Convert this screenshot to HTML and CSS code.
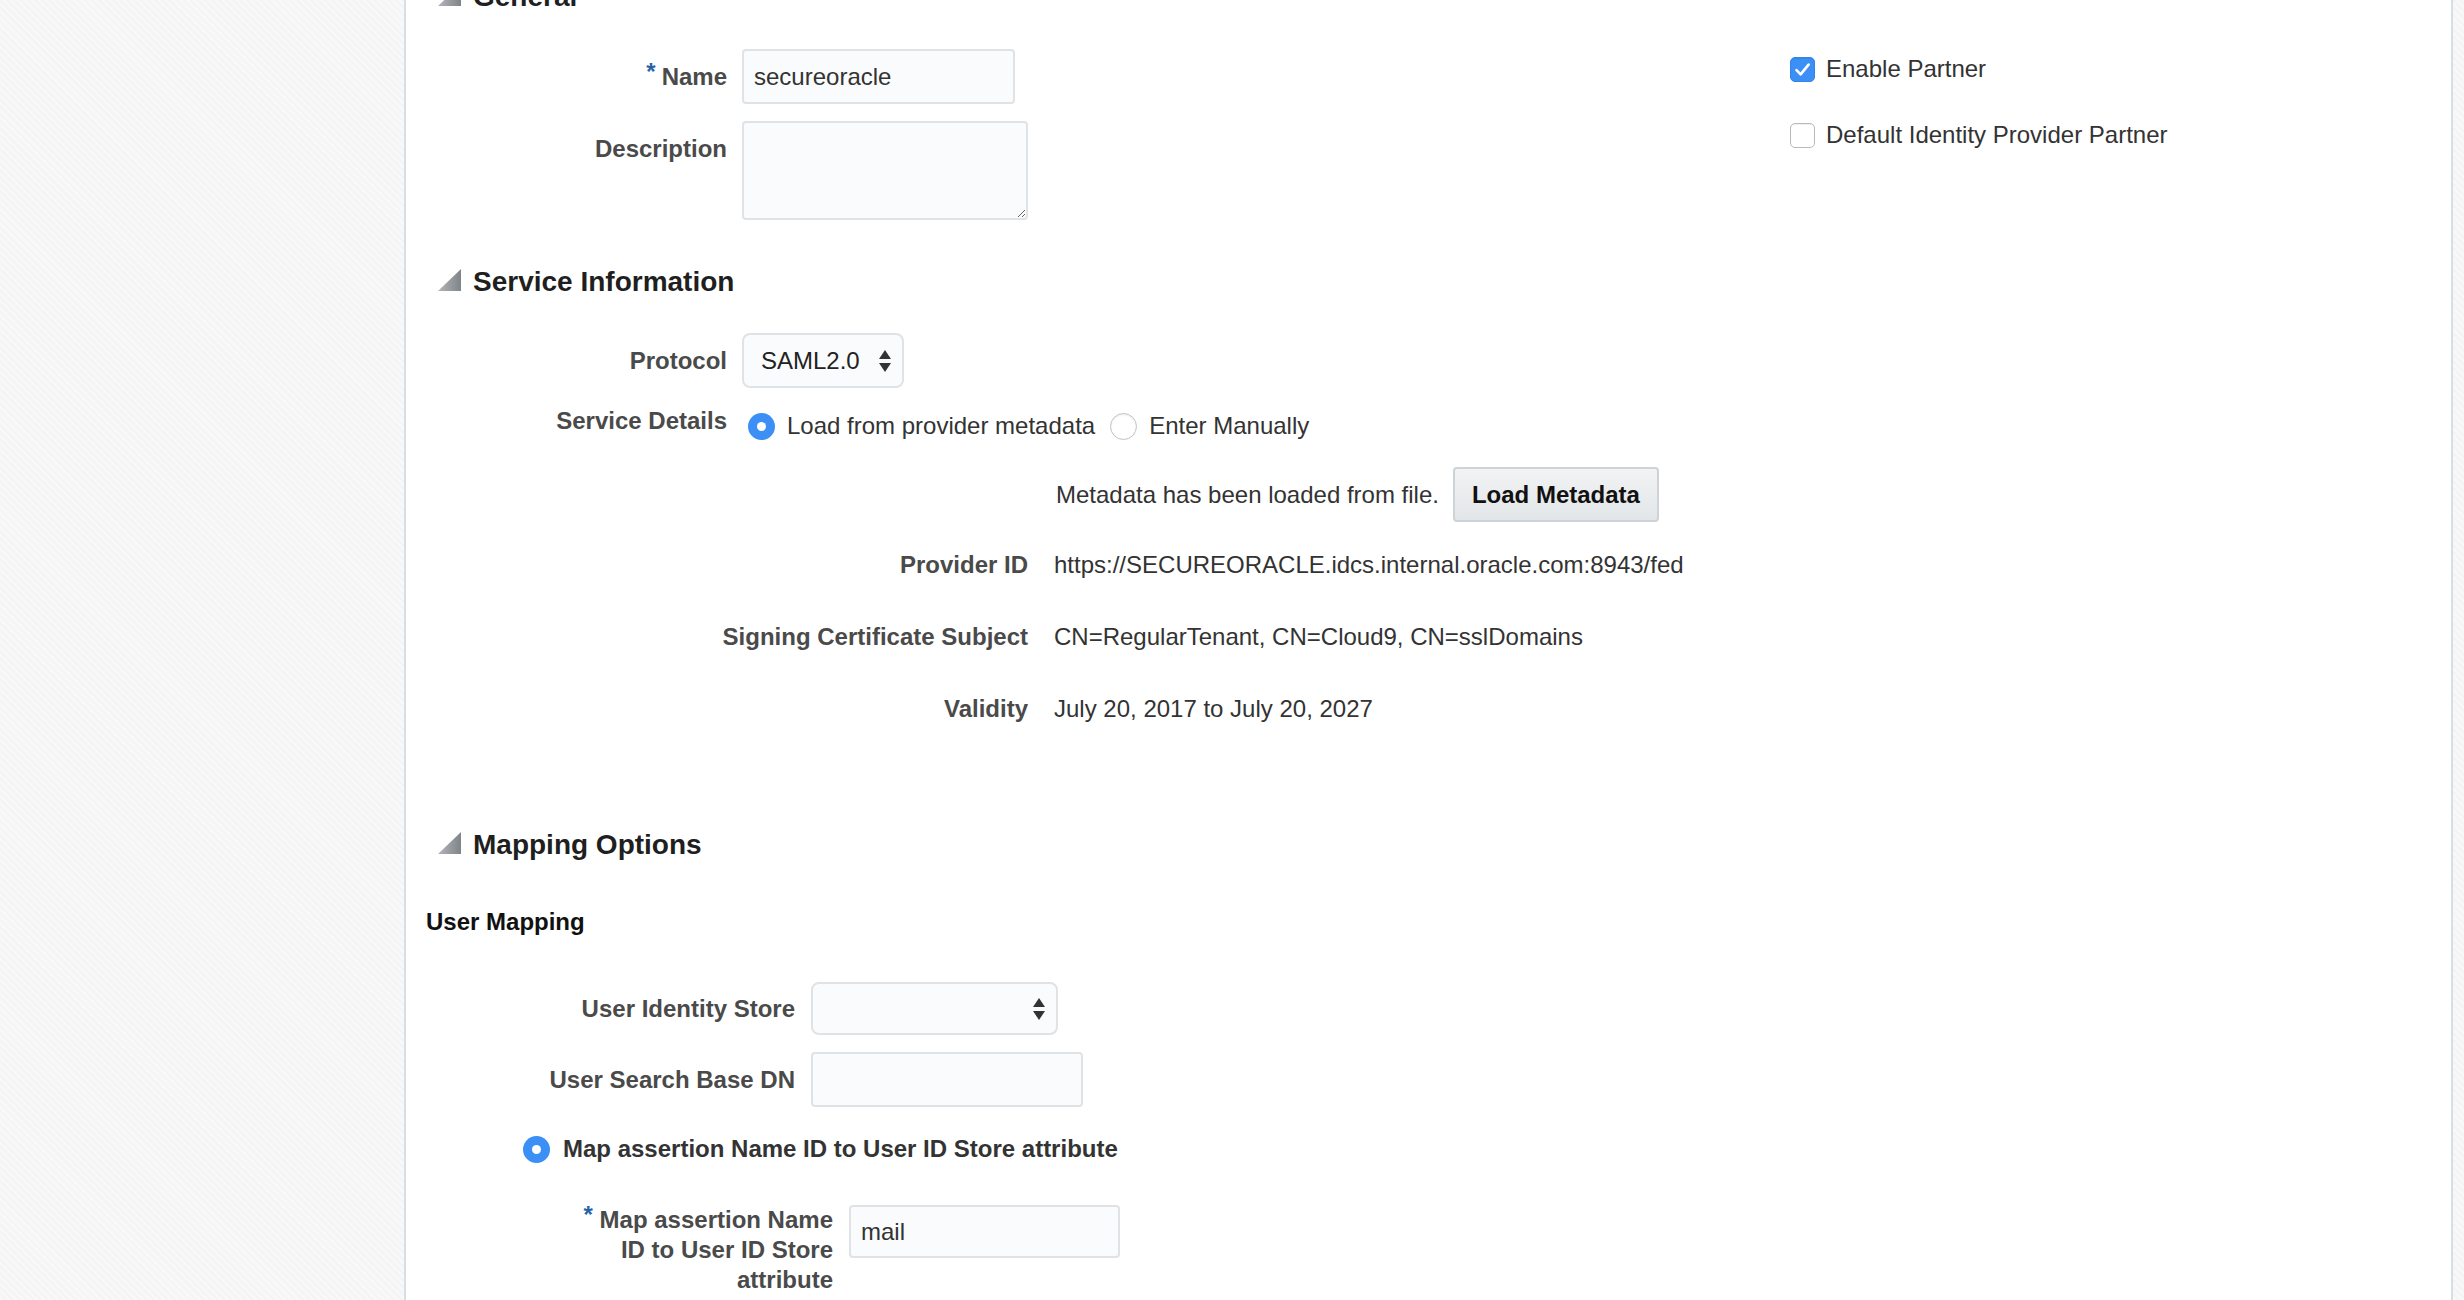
FILE: index.html
```html
<!DOCTYPE html>
<html lang="en">
<head>
<meta charset="utf-8">
<title>Identity Provider Partner</title>
<link rel="stylesheet" href="styles.css">
</head>
<body>
<div class="page">
  <div class="gutter gutter-left"></div>
  <main class="panel">
    <section class="section">
      <h2 class="sec-head first"><svg class="tri" viewBox="0 0 23 22" width="23" height="22"><defs><linearGradient id="tg" x1="0" y1="0" x2="1" y2="0"><stop offset="0" stop-color="#b3b6b9"/><stop offset="1" stop-color="#7f8489"/></linearGradient></defs><polygon points="23,0 23,22 0,22" fill="url(#tg)"/></svg><span>General</span></h2>
      <div class="general-body">
        <div class="general-grid">
          <label class="lbl"><span class="req">*</span>Name</label>
          <input class="field name-field" type="text" value="secureoracle">
          <label class="lbl desc-lbl">Description</label>
          <textarea class="field textarea"></textarea>
        </div>
        <div class="checks">
          <div class="check-row"><span class="checkbox checked"><svg viewBox="0 0 25 25" width="25" height="25"><path d="M6.5 13.2 L10.6 17.3 L18.6 7.6" fill="none" stroke="#fff" stroke-width="2.6" stroke-linecap="round" stroke-linejoin="round"/></svg></span><span>Enable Partner</span></div>
          <div class="check-row"><span class="checkbox"></span><span>Default Identity Provider Partner</span></div>
        </div>
      </div>
    </section>

    <section class="section">
      <h2 class="sec-head service-head"><svg class="tri" viewBox="0 0 23 22" width="23" height="22"><defs><linearGradient id="tg2" x1="0" y1="0" x2="1" y2="0"><stop offset="0" stop-color="#b3b6b9"/><stop offset="1" stop-color="#7f8489"/></linearGradient></defs><polygon points="23,0 23,22 0,22" fill="url(#tg2)"/></svg><span>Service Information</span></h2>
      <div class="frow g1 protocol-row">
        <label class="lbl">Protocol</label>
        <div class="select protocol-select"><span>SAML2.0</span><svg class="arrows" viewBox="0 0 12 22" width="12" height="22"><polygon points="0,9 6,0 12,9" fill="#333"/><polygon points="0,13 12,13 6,22" fill="#333"/></svg></div>
      </div>
      <div class="frow g1 details-row">
        <label class="lbl details-lbl">Service Details</label>
        <div class="radio-group">
          <span class="radio on"><span class="dot"></span></span><span class="radio-text">Load from provider metadata</span>
          <span class="radio off"></span><span class="radio-text">Enter Manually</span>
        </div>
      </div>
      <div class="frow g2 meta-row">
        <span></span>
        <div class="meta-line"><span class="val">Metadata has been loaded from file.</span><button class="btn" type="button">Load Metadata</button></div>
      </div>
      <div class="frow g2 info-row first-info">
        <label class="lbl">Provider ID</label>
        <span class="val">https://SECUREORACLE.idcs.internal.oracle.com:8943/fed</span>
      </div>
      <div class="frow g2 info-row">
        <label class="lbl">Signing Certificate Subject</label>
        <span class="val">CN=RegularTenant, CN=Cloud9, CN=sslDomains</span>
      </div>
      <div class="frow g2 info-row">
        <label class="lbl">Validity</label>
        <span class="val">July 20, 2017 to July 20, 2027</span>
      </div>
    </section>

    <section class="section">
      <h2 class="sec-head mapping-head"><svg class="tri" viewBox="0 0 23 22" width="23" height="22"><defs><linearGradient id="tg3" x1="0" y1="0" x2="1" y2="0"><stop offset="0" stop-color="#b3b6b9"/><stop offset="1" stop-color="#7f8489"/></linearGradient></defs><polygon points="23,0 23,22 0,22" fill="url(#tg3)"/></svg><span>Mapping Options</span></h2>
      <h3 class="sub-head">User Mapping</h3>
      <div class="frow g3 store-row">
        <label class="lbl">User Identity Store</label>
        <div class="select store-select"><span></span><svg class="arrows" viewBox="0 0 12 22" width="12" height="22"><polygon points="0,9 6,0 12,9" fill="#333"/><polygon points="0,13 12,13 6,22" fill="#333"/></svg></div>
      </div>
      <div class="frow g3 dn-row">
        <label class="lbl">User Search Base DN</label>
        <input class="field dn-field" type="text" value="">
      </div>
      <div class="map-radio-row">
        <span class="radio on"><span class="dot"></span></span><span class="map-radio-text">Map assertion Name ID to User ID Store attribute</span>
      </div>
      <div class="frow g4 attr-row">
        <label class="lbl attr-lbl"><span class="req">*</span> Map assertion Name ID to User ID Store attribute</label>
        <input class="field mail-field" type="text" value="mail">
      </div>
    </section>
  </main>
  <div class="gutter gutter-right"></div>
</div>
</body>
</html>
```

FILE: styles.css
```css
html, body {
  margin: 0;
  padding: 0;
}

body {
  font-family: "Liberation Sans", Arial, Helvetica, sans-serif;
  font-size: 24px;
  color: #333;
  background: #f6f6f6;
}

.page {
  display: flex;
  height: 1300px;
  overflow: hidden;
}

.gutter {
  background: repeating-linear-gradient(45deg, #f8f8f8 0 3px, #f4f4f4 3px 5px);
}

.gutter-left {
  width: 404px;
  flex: none;
}

.gutter-right {
  flex: 1;
}

.panel {
  width: 2045px;
  flex: none;
  background: #fff;
  border-left: 2px solid #d6dee6;
  border-right: 2px solid #d6dee6;
}

/* Section headings */
.sec-head {
  display: flex;
  align-items: center;
  gap: 12px;
  height: 40px;
  margin: 0;
  padding-left: 32px;
  font-size: 28px;
  font-weight: bold;
  color: #1f1f1f;
}

.sec-head .tri {
  flex: none;
  margin-top: -4px;
}

.sec-head.first {
  margin-top: -23px;
}

.service-head {
  margin-top: 42px;
}

.mapping-head {
  margin-top: 101px;
}

.sub-head {
  margin: 42px 0 0 20px;
  font-size: 24px;
  line-height: 30px;
  font-weight: bold;
  color: #111;
}

/* Labels and values */
.lbl {
  text-align: right;
  font-weight: bold;
  color: #4a4a4a;
  line-height: 30px;
}

.req {
  color: #2563a9;
  position: relative;
  top: -5px;
  margin-right: 6px;
}

.val {
  color: #333;
  line-height: 30px;
}

/* General */
.general-body {
  display: grid;
  grid-template-columns: 1384px auto;
  margin-top: 32px;
}

.general-grid {
  display: grid;
  grid-template-columns: 321px auto;
  column-gap: 15px;
  row-gap: 17px;
  align-items: center;
  justify-items: start;
}

.general-grid .lbl {
  justify-self: stretch;
}

.desc-lbl {
  align-self: start;
  padding-top: 13px;
}

.field {
  box-sizing: border-box;
  height: 55px;
  border: 2px solid #dfe3e6;
  border-radius: 4px;
  background: #fafbfc;
  font-family: "Liberation Sans", Arial, Helvetica, sans-serif;
  font-size: 24px;
  color: #333;
  padding: 0 10px;
  outline: none;
  margin: 0;
}

.name-field {
  width: 273px;
}

.textarea {
  width: 286px;
  height: 99px;
  resize: both;
  display: block;
}

.checks {
  display: flex;
  flex-direction: column;
  gap: 26px;
}

.check-row {
  display: flex;
  align-items: center;
  gap: 11px;
  height: 40px;
  color: #333;
}

.checkbox {
  box-sizing: border-box;
  width: 25px;
  height: 25px;
  border-radius: 5px;
  border: 1px solid #b9b9b9;
  background: #fff;
  box-shadow: inset 0 1px 1px rgba(0, 0, 0, 0.06);
  display: block;
  flex: none;
}

.checkbox.checked {
  background: #3b8ff5;
  border-color: #3384ea;
}

.checkbox.checked svg {
  display: block;
  margin: -1px;
}

/* Form rows */
.frow {
  display: grid;
  grid-template-columns: var(--lw) auto;
  column-gap: var(--gap);
  align-items: center;
  justify-items: start;
}

.frow .lbl {
  justify-self: stretch;
}

.g1 { --lw: 321px; --gap: 15px; }
.g2 { --lw: 622px; --gap: 26px; }
.g3 { --lw: 389px; --gap: 16px; }
.g4 { --lw: 427px; --gap: 16px; }

.protocol-row {
  margin-top: 31px;
}

.select {
  box-sizing: border-box;
  display: flex;
  align-items: center;
  justify-content: space-between;
  height: 55px;
  border: 2px solid #dfe3e6;
  border-radius: 8px;
  background: #fafbfc;
  padding: 0 11px 0 17px;
  color: #222;
}

.arrows {
  display: block;
  flex: none;
}

.protocol-select {
  width: 162px;
}

.store-select {
  width: 247px;
  height: 53px;
}

.details-row {
  margin-top: 23px;
  align-items: start;
}

.details-lbl {
  margin-top: -5px;
}

.radio-group {
  display: flex;
  align-items: center;
  height: 30px;
  margin-left: 6px;
}

.radio {
  box-sizing: border-box;
  width: 27px;
  height: 27px;
  border-radius: 50%;
  flex: none;
  display: flex;
  align-items: center;
  justify-content: center;
}

.radio.on {
  background: #3b8ff5;
}

.radio .dot {
  width: 9px;
  height: 9px;
  border-radius: 50%;
  background: #fff;
}

.radio.off {
  background: #fff;
  border: 1px solid #c2c2c2;
  box-shadow: inset 0 1px 2px rgba(0, 0, 0, 0.08);
  margin-left: 15px;
}

.radio-text {
  margin-left: 12px;
  color: #333;
  line-height: 30px;
}

.meta-row {
  margin-top: 26px;
}

.meta-line {
  display: flex;
  align-items: center;
  gap: 14px;
  margin-left: 2px;
}

.btn {
  box-sizing: border-box;
  height: 55px;
  width: 206px;
  border: 2px solid #cdd3d7;
  border-radius: 4px;
  background: linear-gradient(#f1f3f4, #e3e6e8);
  font-family: "Liberation Sans", Arial, Helvetica, sans-serif;
  font-size: 24px;
  font-weight: bold;
  color: #111;
  padding: 0;
  margin: 0;
}

.info-row {
  margin-top: 42px;
}

.first-info {
  margin-top: 28px;
}

.store-row {
  margin-top: 45px;
}

.dn-row {
  margin-top: 17px;
}

.dn-field {
  width: 272px;
}

.map-radio-row {
  display: flex;
  align-items: center;
  height: 30px;
  margin: 27px 0 0 117px;
}

.map-radio-text {
  margin-left: 13px;
  font-weight: bold;
  color: #333;
  line-height: 30px;
}

.attr-row {
  margin-top: 41px;
  align-items: start;
}

.attr-lbl {
  justify-self: end !important;
  max-width: 262px;
}

.attr-lbl .req {
  margin-right: 0;
}

.mail-field {
  width: 271px;
  height: 53px;
}
```
